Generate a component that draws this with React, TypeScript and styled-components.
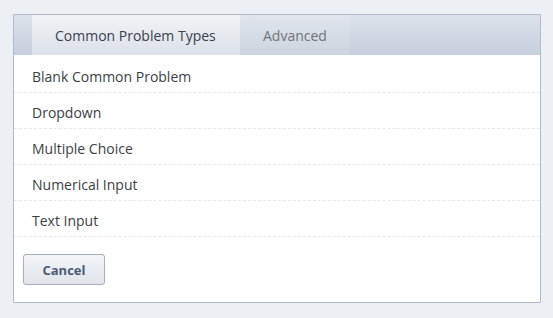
import React from "react";
import styled, { createGlobalStyle } from "styled-components";

const Global = createGlobalStyle`
  html, body { margin: 0; padding: 0; background: #eceff4; }
  body { font-family: "Open Sans", "Liberation Sans", sans-serif; }
`;

const Page = styled.div`
  padding: 14px 12px 0 13px;
  width: 553px;
  height: 318px;
  box-sizing: border-box;
`;

const Panel = styled.div`
  width: 528px;
  background: #fff;
  border: 1px solid #b3bac6;
  border-radius: 1px;
  box-sizing: border-box;
`;

const TabBar = styled.div`
  display: flex;
  height: 40px;
  padding-left: 18px;
  background: linear-gradient(#dde2ea, #c6cfdc);
`;

const Tab = styled.div<{ $active?: boolean }>`
  display: flex;
  align-items: center;
  padding: 0 23px;
  width: ${(p) => (p.$active ? "208px" : "110px")};
  box-sizing: border-box;
  font-size: 14px;
  color: ${(p) => (p.$active ? "#3a3f4a" : "#707378")};
  background: ${(p) =>
    p.$active
      ? "linear-gradient(#f1f3f6, #dce1e9)"
      : "linear-gradient(#e1e5ec, #ccd4df)"};
`;

const List = styled.div`
  display: flex;
  flex-direction: column;
  padding-top: 2px;
`;

const Row = styled.div`
  height: 36px;
  box-sizing: border-box;
  display: flex;
  align-items: center;
  padding: 4px 0 0 18px;
  font-size: 14px;
  color: #3d3f44;
  border-bottom: 1px dashed #e6e8ec;
`;

const Footer = styled.div`
  padding: 17px 9px 17px;
`;

const Button = styled.button`
  width: 82px;
  height: 31px;
  border: 1px solid #a9b0bd;
  border-radius: 3px;
  background: linear-gradient(#f3f5f8, #e0e4ea);
  font-family: "Open Sans", "Liberation Sans", sans-serif;
  font-weight: 700;
  font-size: 13px;
  color: #4d5a72;
  padding: 0;
  cursor: pointer;
`;

const items = [
  "Blank Common Problem",
  "Dropdown",
  "Multiple Choice",
  "Numerical Input",
  "Text Input",
];

export default function App() {
  return (
    <>
      <Global />
      <Page>
        <Panel>
          <TabBar>
            <Tab $active>Common Problem Types</Tab>
            <Tab>Advanced</Tab>
          </TabBar>
          <List>
            {items.map((t) => (
              <Row key={t}>{t}</Row>
            ))}
          </List>
          <Footer>
            <Button>Cancel</Button>
          </Footer>
        </Panel>
      </Page>
    </>
  );
}
